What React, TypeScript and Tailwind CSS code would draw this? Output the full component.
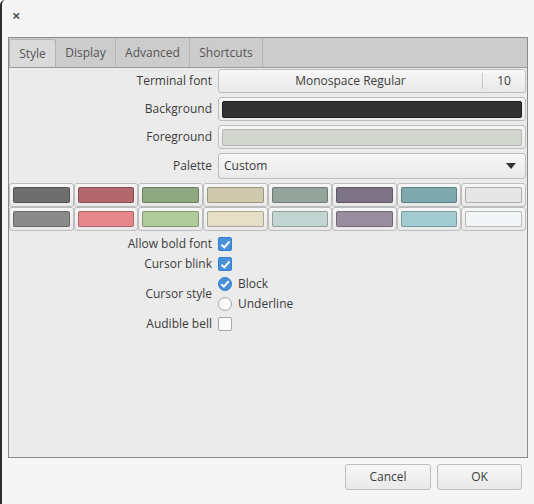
import { useState } from 'react'

const palette = [
    ['#6e6e6e', '#b3686e', '#8fa882', '#cfcaae', '#93a49c', '#7c7486', '#7eaaad', '#e6e6e6'],
    ['#8a8a8a', '#e4868c', '#b0cb9a', '#e3dec5', '#c2d5d0', '#978d9f', '#a2ccd0', '#f3f6f7'],
]

const tabs = [
    { name: 'Style', w: 'w-[47px]' },
    { name: 'Display', w: 'w-[60px]' },
    { name: 'Advanced', w: 'w-[74px]' },
    { name: 'Shortcuts', w: 'w-[73px]' },
]

const Check = ({ checked }: { checked: boolean }) =>
    checked ? (
        <span className="flex h-[14px] w-[14px] items-center justify-center rounded-[2px] border border-[#2f7fd4] bg-[#4a90d9]">
            <svg width="11" height="11" viewBox="0 0 11 11">
                <path d="M1.5 5.8 L4.3 8.4 L9.5 2.3" fill="none" stroke="#fff" strokeWidth="2" />
            </svg>
        </span>
    ) : (
        <span className="h-[14px] w-[14px] rounded-[2px] border border-[#a8a8a8] bg-[#fafafa]" />
    )

const Radio = ({ checked }: { checked: boolean }) =>
    checked ? (
        <span className="flex h-[14px] w-[14px] items-center justify-center rounded-full border border-[#2f7fd4] bg-[#4a90d9]">
            <svg width="10" height="10" viewBox="0 0 10 10">
                <path d="M1.3 5.2 L3.9 7.6 L8.7 2.2" fill="none" stroke="#fff" strokeWidth="1.9" />
            </svg>
        </span>
    ) : (
        <span className="h-[14px] w-[14px] rounded-full border border-[#a8a8a8] bg-[#fafafa]" />
    )

const Label = ({ children }: { children: React.ReactNode }) => (
    <div className="flex items-center justify-end pr-[6px] text-[#3c3c3c]">{children}</div>
)

const btn =
    'rounded-[3px] border border-[#bdbdbd] bg-gradient-to-b from-[#f7f7f7] to-[#e9e9e9]'

export default function App() {
    const [tab, setTab] = useState('Style')

    return (
        <div className="flex h-[504px] w-[534px] flex-col rounded-tl-[5px] border-l-2 border-[#2e2e2e] bg-[#f5f5f5] font-['Open_Sans',sans-serif] text-[12px] text-[#3c3c3c]">
            {/* titlebar */}
            <div className="flex h-[37px] items-start pl-[10px] pt-[8px]">
                <span className="text-[15px] font-bold leading-[15px] text-[#555]">×</span>
            </div>

            {/* notebook */}
            <div className="ml-[6px] mr-[6px] flex h-[421px] flex-col border border-[#8a8a8a] bg-[#ebebeb]">
                <div className="flex h-[30px] border-b border-[#9a9a9a] bg-[#cccccc]">
                    {tabs.map((t) => (
                        <div
                            key={t.name}
                            onClick={() => setTab(t.name)}
                            className={
                                'flex cursor-default items-center justify-center border-r border-[#b4b4b4] text-[#555] ' +
                                t.w +
                                (tab === t.name
                                    ? ' mt-[1px] rounded-t-[3px] border-l border-t border-[#b0b0b0] bg-[#dadada] text-[#444]'
                                    : '')
                            }
                        >
                            {t.name}
                        </div>
                    ))}
                </div>

                <div className="grid grid-cols-[209px_1fr] gap-y-[4px] pr-px pt-px">
                    <Label>Terminal font</Label>
                    <div className={btn + ' flex h-[24px] items-center'}>
                        <span className="flex-1 text-center">Monospace Regular</span>
                        <span className="h-[16px] border-l border-[#c8c8c8]" />
                        <span className="w-[42px] text-center">10</span>
                    </div>

                    <Label>Background</Label>
                    <div className={btn + ' flex h-[24px] items-center px-[3px]'}>
                        <span className="h-[17px] w-full rounded-[2px] border border-[#1e1e1e] bg-[#323232]" />
                    </div>

                    <Label>Foreground</Label>
                    <div className={btn + ' flex h-[24px] items-center px-[3px]'}>
                        <span className="h-[17px] w-full rounded-[2px] border border-[#b4b7b0] bg-[#d3d7cf]" />
                    </div>

                    <Label>Palette</Label>
                    <div className={btn + ' flex h-[26px] items-center pl-[5px] pr-[9px]'}>
                        <span className="flex-1">Custom</span>
                        <svg width="10" height="6" viewBox="0 0 10 6">
                            <path d="M0 0 H10 L5 6 Z" fill="#333" />
                        </svg>
                    </div>
                </div>

                <div className="mt-[4px] grid grid-cols-8 pr-px">
                    {palette.flat().map((c, i) => (
                        <div key={i} className={btn + ' flex h-[24px] items-center px-[3px]'}>
                            <span
                                className="h-[16px] w-full rounded-[2px] border border-black/25"
                                style={{ backgroundColor: c }}
                            />
                        </div>
                    ))}
                </div>

                <div className="mt-[3px] grid grid-cols-[209px_1fr]">
                    <Label>Allow bold font</Label>
                    <div className="flex h-[20px] items-center"><Check checked /></div>

                    <Label>Cursor blink</Label>
                    <div className="flex h-[20px] items-center"><Check checked /></div>

                    <Label>Cursor style</Label>
                    <div className="flex flex-col">
                        <div className="flex h-[20px] items-center gap-[6px]"><Radio checked /><span>Block</span></div>
                        <div className="flex h-[20px] items-center gap-[6px]"><Radio checked={false} /><span>Underline</span></div>
                    </div>

                    <Label>Audible bell</Label>
                    <div className="flex h-[20px] items-center"><Check checked={false} /></div>
                </div>
            </div>

            {/* buttons */}
            <div className="flex justify-end gap-[6px] pr-[12px] pt-[6px]">
                <button className={btn + ' h-[26px] w-[86px]'}>Cancel</button>
                <button className={btn + ' h-[26px] w-[85px]'}>OK</button>
            </div>
        </div>
    )
}
